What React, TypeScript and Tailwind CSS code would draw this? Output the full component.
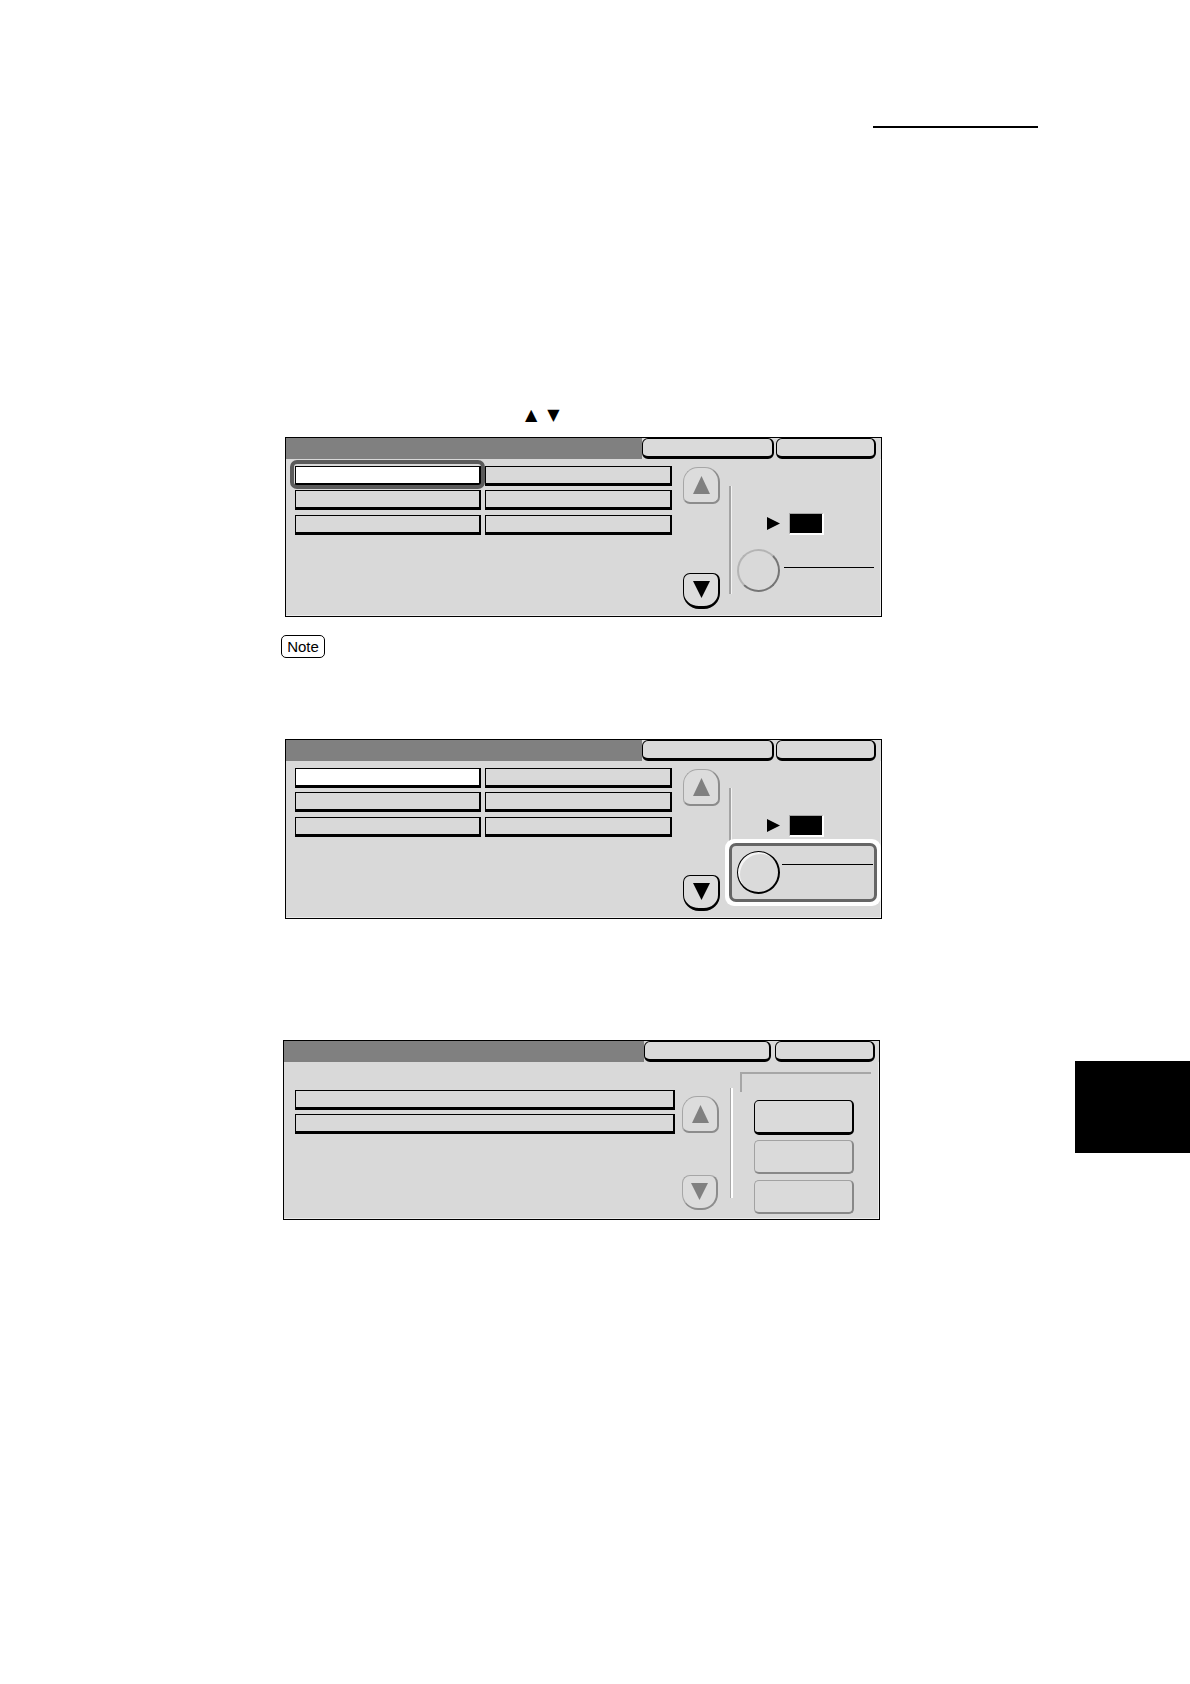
import React from "react";

// small filled triangle used on scroll keys and the pointer
function Tri({ dir, w, h, color }: { dir: "up" | "down" | "right"; w: number; h: number; color: string }) {
  const pts =
    dir === "up" ? "50,0 100,100 0,100" : dir === "down" ? "0,0 100,0 50,100" : "0,0 100,50 0,100";
  return (
    <svg width={w} height={h} viewBox="0 0 100 100" preserveAspectRatio="none" className="block">
      <polygon points={pts} fill={color} />
    </svg>
  );
}

function Header({ wide }: { wide?: boolean }) {
  return (
    <div className="flex h-[21px]">
      <div className="flex-1 bg-[#808080]" />
      {wide ? (
        <div className="flex gap-[4px] pr-[4px]">
          <div className="h-full w-[127px] rounded-[6px] border border-black border-r-2 border-b-[3px] bg-[#dadada]" />
          <div className="h-full w-[100px] rounded-[6px] border border-black border-r-2 border-b-[3px] bg-[#dadada]" />
        </div>
      ) : (
        <div className="flex gap-[2px] pr-[5px]">
          <div className="h-full w-[132px] rounded-[6px] border border-black border-r-2 border-b-[3px] bg-[#dadada]" />
          <div className="h-full w-[100px] rounded-[6px] border border-black border-r-2 border-b-[3px] bg-[#dadada]" />
        </div>
      )}
    </div>
  );
}

function Key({ white, ring }: { white?: boolean; ring?: boolean }) {
  return (
    <div
      className={`relative h-[20px] border border-black border-r-2 border-b-[3px] ${white ? "bg-white" : "bg-[#d9d9d9]"} ${
        ring
          ? "before:absolute before:-top-[7px] before:-bottom-[6px] before:-left-[6px] before:-right-[6px] before:z-10 before:rounded-[7px] before:border-4 before:border-[#5a5a5a]"
          : ""
      }`}
    />
  );
}

function UpKey() {
  return (
    <div className="flex h-[37px] w-[37px] items-center justify-center rounded-t-[15px] rounded-b-[7px] border-[1.5px] border-[#a6a6a6] border-r-2 border-b-[2.5px] border-r-[#8c8c8c] border-b-[#8c8c8c] bg-[#dcdcdc]">
      <Tri dir="up" w={17} h={18} color="#808080" />
    </div>
  );
}

function DownKey({ active }: { active?: boolean }) {
  return active ? (
    <div className="flex h-[36px] w-[37px] items-center justify-center rounded-t-[7px] rounded-b-[16px] border-[1.5px] border-black border-r-2 border-b-[3px] bg-[#dcdcdc]">
      <Tri dir="down" w={17} h={17} color="#000" />
    </div>
  ) : (
    <div className="flex h-[35px] w-[36px] items-center justify-center rounded-t-[8px] rounded-b-[16px] border-[1.5px] border-[#a6a6a6] border-r-2 border-b-[2.5px] border-r-[#8c8c8c] border-b-[#8c8c8c] bg-[#dcdcdc]">
      <Tri dir="down" w={17} h={17} color="#808080" />
    </div>
  );
}

function Counter() {
  return (
    <div className="mt-[54px] flex h-[22px] items-center">
      <div className="ml-[30px]">
        <Tri dir="right" w={13} h={13} color="#000" />
      </div>
      <div className="ml-[9px] h-[22px] w-[35px] border-t border-l border-[#a8a8a8] border-r-2 border-b-2 border-r-white border-b-white bg-black" />
    </div>
  );
}

function SettingsPanel({ ring, highlight }: { ring?: boolean; highlight?: boolean }) {
  return (
    <div className="relative flex h-[180px] w-[597px] flex-col border border-black bg-[#d9d9d9]">
      <Header />
      <div className="flex flex-1 border-r border-b border-[#ededed] pl-[9px]">
        <div className="mt-[7px] grid grid-cols-[186px_187px] gap-x-[4px] gap-y-[4.5px] self-start">
          <Key white ring={ring} />
          <Key />
          <Key />
          <Key />
          <Key />
          <Key />
        </div>
        <div className="ml-[11px] flex w-[37px] flex-col justify-between pt-[8px] pb-[6px]">
          <UpKey />
          <DownKey active />
        </div>
        <div className="ml-[9px] mt-[27px] h-[108px] w-[3px] border-l-2 border-l-[#a4a4a4] border-r border-r-[#f2f2f2]" />
        <div className="flex-1 pl-[5px]">
          <Counter />
          {!highlight && (
            <div className="mt-[14px] flex items-start">
              <div className="h-[43px] w-[43px] rounded-full border-2 border-t-[#b4b4b4] border-l-[#b4b4b4] border-r-[#757575] border-b-[#757575] bg-[#d9d9d9]" />
              <div className="ml-[4px] mt-[18px] h-px w-[90px] bg-black" />
            </div>
          )}
        </div>
      </div>
      {highlight && (
        <div className="absolute top-[99px] left-[439px] z-10 h-[67px] w-[156px] rounded-[9px] bg-white p-[4px]">
          <div className="flex h-full items-start rounded-[7px] border-[3px] border-[#666666] bg-[#d9d9d9] pl-[5px] pt-[5px]">
            <div className="h-[43px] w-[43px] rounded-full border-[1.5px] border-r-[2.5px] border-b-[2.5px] border-black bg-[#dadada] shadow-[inset_2px_2px_0_#f4f4f4]" />
            <div className="ml-[2px] mt-[13px] h-px w-[91px] bg-black" />
          </div>
        </div>
      )}
    </div>
  );
}

function ListPanel() {
  return (
    <div className="relative flex h-[180px] w-[597px] flex-col border border-black bg-[#d9d9d9]">
      <Header wide />
      <div className="flex flex-1 border-r border-b border-[#ededed] pl-[11px]">
        <div className="mt-[28px] flex w-[380px] flex-col gap-[4.5px] self-start">
          <Key />
          <Key />
        </div>
        <div className="ml-[7px] flex w-[37px] flex-col justify-between pt-[34px] pb-[8px]">
          <UpKey />
          <DownKey />
        </div>
        <div className="ml-[11px] mt-[26px] h-[110px] w-[3px] border-l border-l-[#a8a8a8] border-r-2 border-r-white" />
        <div className="flex flex-1 flex-col pl-[7px]">
          <div className="mt-[10px] h-[20px] w-[131px] border-t-2 border-l-2 border-[#a6a6a6]" />
          <div className="mt-[8px] ml-[14px] flex w-[100px] flex-col gap-[5.5px]">
            <div className="h-[35px] rounded-[5px] border-[1.5px] border-black border-r-2 border-b-[3px] bg-[#dadada]" />
            <div className="h-[34px] rounded-[5px] border-[1.5px] border-[#a2a2a2] border-r-2 border-b-[2.5px] border-r-[#888888] border-b-[#888888] bg-[#dadada]" />
            <div className="h-[34px] rounded-[5px] border-[1.5px] border-[#a2a2a2] border-r-2 border-b-[2.5px] border-r-[#888888] border-b-[#888888] bg-[#dadada]" />
          </div>
        </div>
      </div>
    </div>
  );
}

export default function App() {
  return (
    <div className="flex min-h-[1684px] w-[1190px] flex-col items-start bg-white font-['Liberation_Sans',Arial,sans-serif] text-black">
      <div className="ml-[873px] mt-[126px] h-[1.5px] w-[165px] bg-black" />

      <div className="ml-[525px] mt-[279px] flex h-[16px] items-center gap-[10px] font-['DejaVu_Sans',sans-serif] text-[16px] leading-none">
        <span>▲</span>
        <span>▼</span>
      </div>

      <div className="ml-[285px] mt-[14px]">
        <SettingsPanel ring />
      </div>

      <div className="ml-[281px] mt-[18px] flex h-[23px] w-[44px] items-center justify-center rounded-[5px] border border-r-[1.5px] border-b-[1.5px] border-black text-[15px] leading-none">
        Note
      </div>

      <div className="ml-[285px] mt-[81px]">
        <SettingsPanel highlight />
      </div>

      <div className="mt-[121px] flex w-full items-start">
        <div className="ml-[283px]">
          <ListPanel />
        </div>
        <div className="ml-auto mt-[21px] h-[92px] w-[115px] bg-black" />
      </div>
    </div>
  );
}
